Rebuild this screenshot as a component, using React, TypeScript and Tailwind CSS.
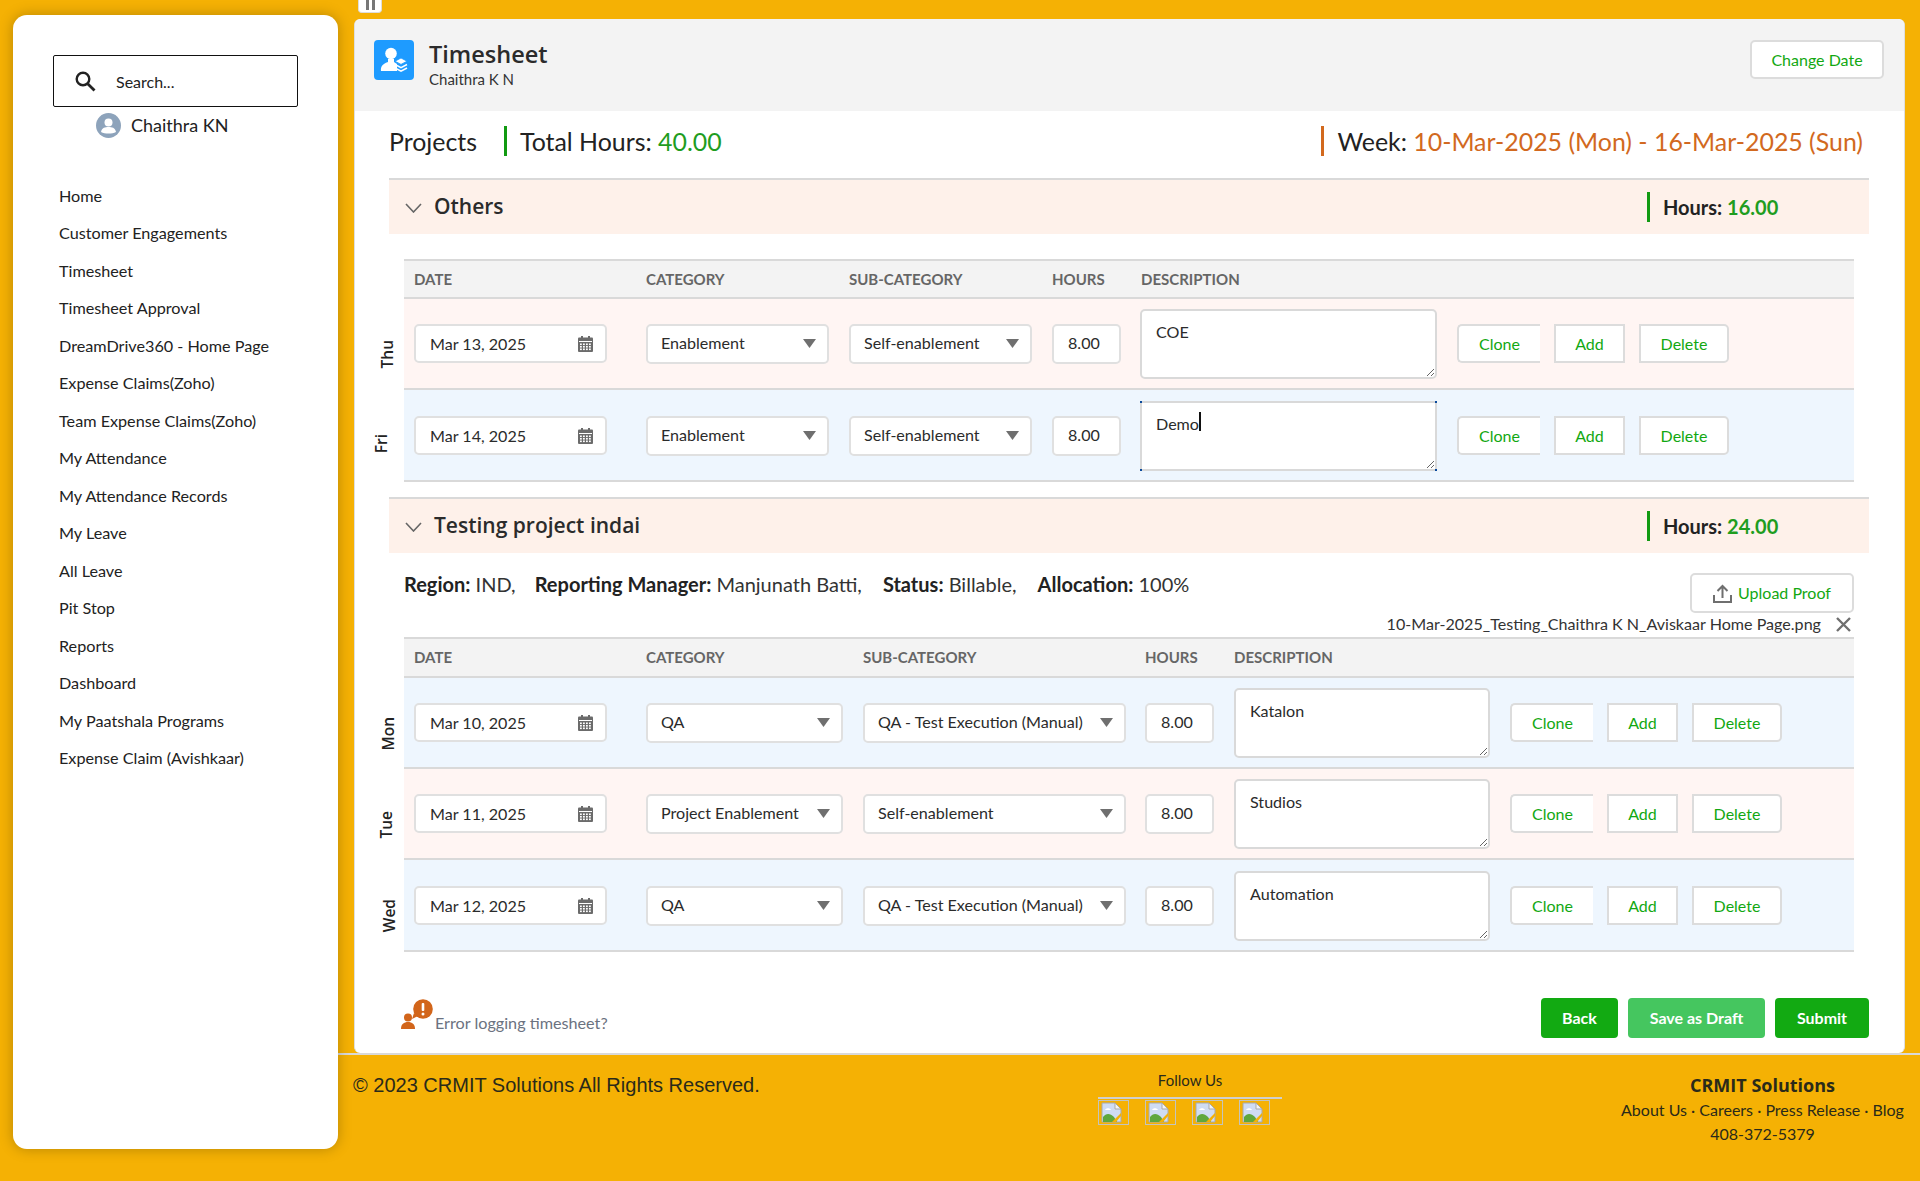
import React from "react";

const GREEN = "text-[#12a812]";

const navItems = [
  "Home",
  "Customer Engagements",
  "Timesheet",
  "Timesheet Approval",
  "DreamDrive360 - Home Page",
  "Expense Claims(Zoho)",
  "Team Expense Claims(Zoho)",
  "My Attendance",
  "My Attendance Records",
  "My Leave",
  "All Leave",
  "Pit Stop",
  "Reports",
  "Dashboard",
  "My Paatshala Programs",
  "Expense Claim (Avishkaar)",
];

function CalendarIcon() {
  return (
    <svg width="15" height="16" viewBox="0 0 15 16" className="shrink-0">
      <rect x="3" y="0" width="2" height="3" fill="#6b6b6b" />
      <rect x="10" y="0" width="2" height="3" fill="#6b6b6b" />
      <rect x="0" y="1.5" width="15" height="14.5" rx="1" fill="#6b6b6b" />
      <rect x="1" y="5" width="13" height="1" fill="#ffffff" />
      {[7.5, 10, 12.5].map((y) =>
        [3, 6, 9, 12].map((x) => (
          <rect key={`${x}-${y}`} x={x - 1} y={y} width="1.8" height="1.6" fill="#ffffff" />
        ))
      )}
    </svg>
  );
}

function Caret() {
  return (
    <svg width="13" height="9" viewBox="0 0 13 9" className="shrink-0">
      <path d="M0 0H13L6.5 9Z" fill="#6f6f6f" />
    </svg>
  );
}

function BrokenImage() {
  return (
    <div className="w-[31px] h-[25px] border border-[#c4c4bc] flex items-center pl-[2px]">
      <svg width="21" height="21" viewBox="0 0 21 21">
        <path d="M1 1H14L20 7V20H1Z" fill="#cfdcf3" stroke="#a9a9a9" strokeWidth="1" />
        <path d="M14 1V7H20Z" fill="#f4f4f4" stroke="#a9a9a9" strokeWidth="1" />
        <path d="M4 8c1-2.5 5-2.5 6 0Z" fill="#ffffff" />
        <path d="M2 20V15c3-4 7-4 11 0l3 5Z" fill="#5fa73d" />
        <path d="M11 20L20 11V14L15 20Z" fill="#f5b104" />
      </svg>
    </div>
  );
}

function Btn({ label, cls }: { label: string; cls: string }) {
  return (
    <div className={`h-[39px] bg-white border-2 border-[#dcdcdc] flex items-center justify-center text-base ${GREEN} ${cls}`}>
      {label}
    </div>
  );
}

type RowData = {
  day: string;
  dayCls: string;
  gutter: string;
  bg: string;
  date: string;
  cat: string;
  sub: string;
  desc: string;
  focused?: boolean;
  rowH: string;
};

type Cols = {
  headH: string;
  cat: string;
  sub: string;
  hours: string;
  descHead: string;
  desc: string;
  date: string;
};

const cols1: Cols = {
  headH: "h-[40px]",
  date: "w-[193px]",
  cat: "w-[183px] ml-[39px]",
  sub: "w-[183px] ml-[20px]",
  hours: "w-[69px] ml-[20px]",
  descHead: "ml-[20px]",
  desc: "w-[297px] ml-[19px]",
};

const cols2: Cols = {
  headH: "h-[41px]",
  date: "w-[193px]",
  cat: "w-[197px] ml-[39px]",
  sub: "w-[263px] ml-[20px]",
  hours: "w-[69px] ml-[19px]",
  descHead: "ml-[20px]",
  desc: "w-[256px] ml-[20px]",
};

function TableHead({ c }: { c: Cols }) {
  return (
    <div className={`ml-[30px] w-[1450px] ${c.headH} bg-[#f3f3f3] border-y-2 border-[#d9d9d9] flex items-center pl-[10px] text-[15px] font-bold text-[#666666]`}>
      <div className={c.date}>DATE</div>
      <div className={c.cat}>CATEGORY</div>
      <div className={c.sub}>SUB-CATEGORY</div>
      <div className={c.hours}>HOURS</div>
      <div className={c.descHead}>DESCRIPTION</div>
    </div>
  );
}

function Row({ r, c }: { r: RowData; c: Cols }) {
  return (
    <div className="flex">
      <div className={`w-[30px] flex items-center justify-center ${r.gutter}`}>
        <span className={`[writing-mode:vertical-rl] rotate-180 text-[15.5px] font-semibold text-[#222222] leading-none font-['Open_Sans',sans-serif] ${r.dayCls}`}>{r.day}</span>
      </div>
      <div className={`w-[1450px] ${r.rowH} ${r.bg} border-b-2 border-[#d9d9d9] flex items-center pl-[10px] text-[16.1px] text-[#2b2b2b]`}>
        <div className={`${c.date} h-[39px] bg-white border-2 border-[#e0e0e0] rounded-[5px] flex items-center justify-between pl-[14px] pr-[12px]`}>
          <span className="pt-[1px]">{r.date}</span>
          <CalendarIcon />
        </div>
        <div className={`${c.cat} h-[40px] bg-white border-2 border-[#e0e0e0] rounded-[5px] flex items-center justify-between pl-[13px] pr-[11px]`}>
          <span className="whitespace-nowrap pb-[1px]">{r.cat}</span>
          <Caret />
        </div>
        <div className={`${c.sub} h-[40px] bg-white border-2 border-[#e0e0e0] rounded-[5px] flex items-center justify-between pl-[13px] pr-[11px]`}>
          <span className="whitespace-nowrap pb-[1px]">{r.sub}</span>
          <Caret />
        </div>
        <div className={`${c.hours} h-[40px] bg-white border-2 border-[#e0e0e0] rounded-[5px] flex items-center pl-[14px] pb-[1px]`}>8.00</div>
        <div className={`${c.desc} h-[70px] mt-[1px] relative`}>
          <textarea
            readOnly
            defaultValue={r.desc}
            className={`block w-full h-full bg-white border-2 border-[#d9d9d9] px-[14px] py-[9px] outline-none text-[16.1px] text-[#2b2b2b] ${r.focused ? "" : "rounded-[5px]"}`}
          />
          {r.focused && (
            <>
              <span className="absolute left-[15px] top-[11px] pl-[44px] h-[19px] border-r-2 border-[#111111]" />
              <span className="absolute left-0 top-0 w-[2px] h-[2px] bg-[#0a4a9c]" />
              <span className="absolute right-0 top-0 w-[2px] h-[2px] bg-[#0a4a9c]" />
              <span className="absolute left-0 bottom-0 w-[2px] h-[2px] bg-[#0a4a9c]" />
              <span className="absolute right-0 bottom-0 w-[2px] h-[2px] bg-[#0a4a9c]" />
            </>
          )}
        </div>
        <Btn label="Clone" cls="w-[83px] ml-[20px] rounded-l-[5px] border-r-0" />
        <Btn label="Add" cls="w-[71px] ml-[14px]" />
        <Btn label="Delete" cls="w-[90px] ml-[14px] rounded-r-[5px]" />
      </div>
    </div>
  );
}

function SectionHead({ title, hours }: { title: string; hours: string }) {
  return (
    <div className="ml-[34px] w-[1480px] h-[56px] bg-[#fef1ea] border-t-2 border-[#d9d9d9] flex items-center">
      <svg width="17" height="10" viewBox="0 0 17 10" className="ml-[16px] mt-[2px]">
        <path d="M1 1L8.5 9L16 1" fill="none" stroke="#666666" strokeWidth="1.6" />
      </svg>
      <span className="ml-[12px] mb-[2px] text-[21px] font-semibold text-[#2b2b2b] font-['Open_Sans','Lato',sans-serif] leading-none">{title}</span>
      <div className="ml-auto mr-[89px] w-[130px] flex items-center">
        <div className="h-[30px] w-[3px] bg-[#129a12] -ml-[3px]" />
        <div className="ml-[13px] text-[20px] font-bold text-[#222222] whitespace-nowrap">
          Hours: <span className="text-[#1f9d1f]">{hours}</span>
        </div>
      </div>
    </div>
  );
}

export default function App() {
  return (
    <div className="relative flex w-[1920px] h-[1181px] overflow-hidden bg-[#f5b104] font-['Lato','Liberation_Sans',sans-serif] text-[#222222]">
      <aside className="ml-[13px] mt-[15px] w-[325px] h-[1134px] shrink-0 bg-white rounded-[14px] shadow-[0_0_14px_rgba(0,0,0,0.25)] pt-[40px] z-10">
        <div className="ml-[40px] w-[245px] h-[52px] border border-[#111111] rounded-[2px] flex items-center pl-[21px]">
          <svg width="21" height="21" viewBox="0 0 21 21">
            <circle cx="8" cy="8" r="6.3" fill="none" stroke="#222222" strokeWidth="2.4" />
            <path d="M12.7 12.7L19.5 19.5" stroke="#222222" strokeWidth="2.8" />
          </svg>
          <span className="ml-[20px] pt-[1px] text-[16px] text-[#222222]">Search...</span>
        </div>
        <div className="mt-[6px] ml-[83px] flex items-center h-[25px]">
          <svg width="25" height="25" viewBox="0 0 25 25">
            <circle cx="12.5" cy="12.5" r="12.5" fill="#8da3bb" />
            <circle cx="12.5" cy="9.5" r="4" fill="#ffffff" />
            <path d="M5 19c1-4.5 4-5 7.5-5s6.5.5 7.5 5c-4 2-11 2-15 0Z" fill="#ffffff" />
          </svg>
          <span className="ml-[10px] text-[18px] text-[#222222]">Chaithra KN</span>
        </div>
        <nav className="mt-[39px] pl-[46px] text-[16.2px] text-[#222222]">
          {navItems.map((n) => (
            <div key={n} className="h-[37.5px] flex items-center">{n}</div>
          ))}
        </nav>
      </aside>

      <div className="relative flex-1 flex flex-col">
        <div className="absolute left-[20px] top-0 w-[24px] h-[13px] bg-white rounded-b-[4px] border border-[#dddddd] border-t-0 flex justify-center gap-[3px]">
          <span className="w-[3px] h-[10px] bg-[#777777]" />
          <span className="w-[3px] h-[10px] bg-[#777777]" />
        </div>

        <main className="mt-[19px] ml-[16px] w-[1551px] h-[1034px] bg-white rounded-[6px] border-x border-[#dedede]">
          <header className="h-[92px] bg-[#f3f3f3] rounded-t-[6px] flex items-start pl-[19px] pr-[20px] pt-[21px]">
            <div className="w-[40px] h-[40px] bg-[#1e9bff] rounded-[4px] flex items-center justify-center">
              <svg width="28" height="30" viewBox="0 0 28 30">
                <circle cx="11" cy="8.5" r="5.8" fill="#ffffff" />
                <path d="M8 14h6v3l3 2v7H1c-.5-4 1-7 7-9Z" fill="#ffffff" />
                <path d="M21 13l6 3.2-6 3.2-6-3.2Z" fill="#ffffff" stroke="#1e9bff" strokeWidth=".8" />
                <path d="M15 19.5l6 3.2 6-3.2M15 23l6 3.2 6-3.2" fill="none" stroke="#ffffff" strokeWidth="1.6" />
              </svg>
            </div>
            <div className="ml-[15px] -mt-[2px]">
              <div className="text-[23.5px] leading-[32px] font-semibold text-[#2b2b2b] font-['Open_Sans','Lato',sans-serif]">Timesheet</div>
              <div className="-mt-[1px] text-[15px] leading-[20px] text-[#333333]">Chaithra K N</div>
            </div>
            <div className="ml-auto w-[134px] h-[39px] bg-white border-2 border-[#dcdcdc] rounded-[5px] flex items-center justify-center text-[16px] text-[#12a812]">
              Change Date
            </div>
          </header>

          <div className="mt-[15px] pl-[34px] pr-[41px] h-[30px] flex items-center text-[24.9px] text-[#222222]">
            <span className="w-[115px] pt-[1px]">Projects</span>
            <div className="h-[30px] w-[3px] bg-[#129a12]" />
            <span className="ml-[13px] pt-[1px]">
              Total Hours: <span className="text-[#1f9d1f]">40.00</span>
            </span>
            <div className="ml-auto h-[30px] w-[3px] bg-[#d2691e]" />
            <span className="ml-[13px] pt-[1px]">
              Week: <span className="text-[#d2691e]">10-Mar-2025 (Mon) - 16-Mar-2025 (Sun)</span>
            </span>
          </div>

          <div className="mt-[22px]">
            <SectionHead title="Others" hours="16.00" />
            <div className="mt-[25px] ml-[19px]">
              <TableHead c={cols1} />
              <Row c={cols1} r={{ day: "Thu", dayCls: "mr-[3px]", gutter: "pt-[20px]", bg: "bg-[#fff5f3]", date: "Mar 13, 2025", cat: "Enablement", sub: "Self-enablement", desc: "COE", rowH: "h-[91px]" }} />
              <Row c={cols1} r={{ day: "Fri", dayCls: "mr-[14px]", gutter: "pt-[16px]", bg: "bg-[#eef6fe]", date: "Mar 14, 2025", cat: "Enablement", sub: "Self-enablement", desc: "Demo", focused: true, rowH: "h-[92px] pt-[1px]" }} />
            </div>
          </div>

          <div className="mt-[15px]">
            <SectionHead title="Testing project indai" hours="24.00" />
            <div className="ml-[49px] w-[1450px] h-[84px] flex justify-between pt-[20px]">
              <div className="-mt-[2px] text-[20px] leading-[26px] whitespace-nowrap text-[#333333]">
                <b className="text-[#222222]">Region:</b> IND,<b className="ml-[19px] text-[#222222]">Reporting Manager:</b> Manjunath Batti,<b className="ml-[21px] text-[#222222]">Status:</b> Billable,<b className="ml-[21px] text-[#222222]">Allocation:</b> 100%
              </div>
              <div className="flex flex-col items-end">
                <div className="w-[164px] h-[40px] bg-white border-2 border-[#dcdcdc] rounded-[5px] flex items-center justify-center gap-[6px] text-[16px] text-[#12a812]">
                  <svg width="19" height="19" viewBox="0 0 19 19">
                    <path d="M9.5 14V2M4.5 7l5-5 5 5" fill="none" stroke="#6f6f6f" strokeWidth="2" />
                    <path d="M1 11v7h17v-7" fill="none" stroke="#6f6f6f" strokeWidth="2" />
                  </svg>
                  Upload Proof
                </div>
                <div className="mt-[1px] h-[21px] flex items-center text-[16.1px] text-[#333333] whitespace-nowrap">
                  10-Mar-2025_Testing_Chaithra K N_Aviskaar Home Page.png
                  <svg width="15" height="15" viewBox="0 0 15 15" className="ml-[15px] mr-[3px]">
                    <path d="M1 1L14 14M14 1L1 14" stroke="#6f6f6f" strokeWidth="2.4" />
                  </svg>
                </div>
              </div>
            </div>
            <div className="ml-[19px]">
              <TableHead c={cols2} />
              <Row c={cols2} r={{ day: "Mon", dayCls: "", gutter: "pt-[20px]", bg: "bg-[#eef6fe]", date: "Mar 10, 2025", cat: "QA", sub: "QA - Test Execution (Manual)", desc: "Katalon", rowH: "h-[91px]" }} />
              <Row c={cols2} r={{ day: "Tue", dayCls: "mr-[4px]", gutter: "pt-[20px]", bg: "bg-[#fff5f3]", date: "Mar 11, 2025", cat: "Project Enablement", sub: "Self-enablement", desc: "Studios", rowH: "h-[91px]" }} />
              <Row c={cols2} r={{ day: "Wed", dayCls: "ml-[2px]", gutter: "pt-[20px]", bg: "bg-[#eef6fe]", date: "Mar 12, 2025", cat: "QA", sub: "QA - Test Execution (Manual)", desc: "Automation", rowH: "h-[92px] pt-[1px]" }} />
            </div>
          </div>

          <div className="mt-[46px] pl-[46px] pr-[35px] flex items-start justify-between">
            <div className="flex items-end h-[36px]">
              <svg width="32" height="30" viewBox="0 0 32 30" className="shrink-0 mb-[5px]">
                <circle cx="22" cy="10" r="9.8" fill="#d2651a" />
                <path d="M13 14l-2 6 6-3Z" fill="#d2651a" />
                <rect x="20.7" y="4" width="2.6" height="8" rx="1" fill="#ffffff" />
                <circle cx="22" cy="15" r="1.5" fill="#ffffff" />
                <circle cx="7" cy="18.5" r="4" fill="#d2651a" />
                <path d="M0 30c0-5 3-7 7-7s7 2 7 7Z" fill="#d2651a" />
              </svg>
              <span className="ml-[2px] mb-[1px] text-[16.2px] text-[#6b7280] leading-[20px]">Error logging timesheet?</span>
            </div>
            <div className="flex gap-[10px] text-[16px] font-bold text-white">
              <div className="w-[77px] h-[40px] bg-[#12aa12] rounded-[4px] flex items-center justify-center">Back</div>
              <div className="w-[137px] h-[40px] bg-[#45c65f] rounded-[4px] flex items-center justify-center">Save as Draft</div>
              <div className="w-[94px] h-[40px] bg-[#12aa12] rounded-[4px] flex items-center justify-center">Submit</div>
            </div>
          </div>
        </main>

        <footer className="flex-1 border-t-2 border-[#d9d9d9] pl-[15px] pr-[15px] flex items-start text-[#2a2a1a]">
          <div className="w-[745px] pt-[17px] text-[20px] leading-[26px] font-['Liberation_Sans',sans-serif]">© 2023 CRMIT Solutions All Rights Reserved.</div>
          <div className="w-[184px] pt-[15px] flex flex-col">
            <div className="text-center text-[15px] leading-[20px] pb-[7px] border-b-2 border-[#cfcfcf]">Follow Us</div>
            <div className="mt-[1px] flex gap-[16px]">
              <BrokenImage />
              <BrokenImage />
              <BrokenImage />
              <BrokenImage />
            </div>
          </div>
          <div className="ml-auto w-[285px] pt-[18px] flex flex-col items-center whitespace-nowrap">
            <div className="text-[18px] font-bold leading-[24px] font-['Open_Sans','Lato',sans-serif]">CRMIT Solutions</div>
            <div className="mt-[2px] text-[16px] leading-[22px]">About Us · Careers · Press Release · Blog</div>
            <div className="mt-[2px] text-[16px] leading-[22px]">408-372-5379</div>
          </div>
        </footer>
      </div>
    </div>
  );
}
